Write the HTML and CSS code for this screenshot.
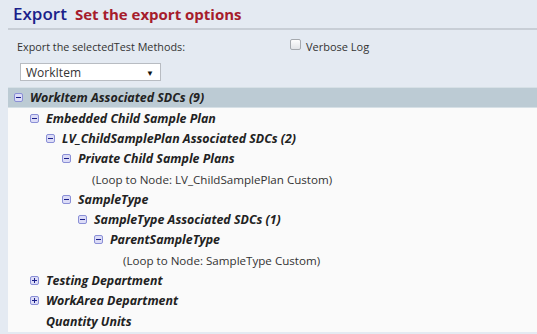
FILE: index.html
```html
<!DOCTYPE html>
<html lang="en">
<head>
    <meta charset="UTF-8">
    <title>Export</title>
    <link rel="stylesheet" href="styles.css">
</head>
<body>

	<header class="title">
		<h1>Export</h1>
		<h2>Set the export options</h2>
	</header>

	<div class="options">
		<div class="opt-row">
			<span class="label">Export the selectedTest Methods:</span>
			<label class="verbose"><span class="check"></span>Verbose Log</label>
		</div>
		<div class="select">
			<span>WorkItem</span>
			<span class="arrow">&#9660;</span>
		</div>
	</div>

	<div class="tree">
		<div class="node top lvl0"><span class="tog minus"></span><span>WorkItem Associated SDCs (9)</span></div>
		<div class="node lvl1"><span class="tog minus"></span><span>Embedded Child Sample Plan</span></div>
		<div class="node lvl2"><span class="tog minus"></span><span>LV_ChildSamplePlan Associated SDCs (2)</span></div>
		<div class="node lvl3"><span class="tog minus"></span><span>Private Child Sample Plans</span></div>
		<div class="node loop lvl4"><span>(Loop to Node: LV_ChildSamplePlan Custom)</span></div>
		<div class="node lvl3"><span class="tog minus"></span><span>SampleType</span></div>
		<div class="node lvl4"><span class="tog minus"></span><span>SampleType Associated SDCs (1)</span></div>
		<div class="node lvl5"><span class="tog minus"></span><span>ParentSampleType</span></div>
		<div class="node loop lvl6"><span>(Loop to Node: SampleType Custom)</span></div>
		<div class="node lvl1"><span class="tog plus"></span><span>Testing Department</span></div>
		<div class="node lvl1"><span class="tog plus"></span><span>WorkArea Department</span></div>
		<div class="node lvl1"><span class="tog none"></span><span>Quantity Units</span></div>
	</div>

</body>
</html>
```

FILE: styles.css
```css
body {
	margin: 0;
	padding: 0 0 0 8px;
	background-color: #e4eaf2;
	font-family: "Open Sans", Arial, sans-serif;
	color: #333;
	height: 334px;
	overflow: hidden;
}

.title {
	display: flex;
	align-items: baseline;
	gap: 8px;
	padding: 2px 0 0 5px;
	height: 26px;
	border-bottom: 2px solid #c8ced6;
}

.title h1 {
	margin: 0;
	font-size: 17px;
	font-weight: 600;
	color: #1b1f8a;
}

.title h2 {
	margin: 0;
	font-size: 15px;
	font-weight: 700;
	color: #a61c2c;
}

.options {
	padding: 8px 0 0 9px;
	height: 57px;
	box-sizing: border-box;
}

.opt-row {
	display: flex;
	align-items: center;
	font-size: 10.8px;
	height: 16px;
}

.label {
	width: 273px;
}

.verbose {
	display: flex;
	align-items: center;
	gap: 5px;
	font-size: 11px;
	margin-top: 1px;
}

.check {
	width: 9px;
	height: 9px;
	margin-top: -4px;
	border: 1px solid #a5a9ae;
	border-radius: 2px;
	background: linear-gradient(#fdfdfd, #e2e4e7);
}

.select {
	display: flex;
	justify-content: space-between;
	align-items: center;
	margin: 9px 0 0 3px;
	width: 141px;
	height: 18px;
	padding: 0 6px 0 5px;
	box-sizing: border-box;
	background-color: #fff;
	border: 1px solid #b8bcc2;
	font-size: 12px;
	color: #333;
}

.arrow {
	font-size: 8px;
	color: #111;
}

.tree {
	background-color: #fafafa;
	height: 245px;
}

.node {
	display: flex;
	align-items: center;
	height: 20.3px;
	font-size: 12.4px;
	font-weight: 700;
	font-style: italic;
	color: #222;
	white-space: nowrap;
}

.node.top {
	background-color: #bccbd4;
	border-top: 1px solid #d6e0e6;
	border-bottom: 1px solid #d6e0e6;
	height: 19px;
}

.loop {
	font-weight: 400;
	font-style: normal;
	font-size: 11.6px;
	color: #333;
}

.tog {
	width: 7px;
	height: 7px;
	border: 1px solid #8a8fd6;
	border-radius: 2px;
	background-color: #dcdcf7;
	margin-right: 7px;
	position: relative;
	flex: none;
}

.tog::before {
	content: "";
	position: absolute;
	left: 1px;
	top: 3px;
	width: 5px;
	height: 1px;
	background-color: #1b1f8a;
}

.tog.plus::after {
	content: "";
	position: absolute;
	left: 3px;
	top: 1px;
	width: 1px;
	height: 5px;
	background-color: #1b1f8a;
}

.tog.none {
	visibility: hidden;
}

.lvl0 { padding-left: 6px; }
.lvl1 { padding-left: 22px; }
.lvl2 { padding-left: 38px; }
.lvl3 { padding-left: 54px; }
.lvl4 { padding-left: 70px; }
.lvl5 { padding-left: 86px; }
.lvl6 { padding-left: 102px; }

.loop.lvl4 { padding-left: 84px; }
.loop.lvl6 { padding-left: 115px; }
```
